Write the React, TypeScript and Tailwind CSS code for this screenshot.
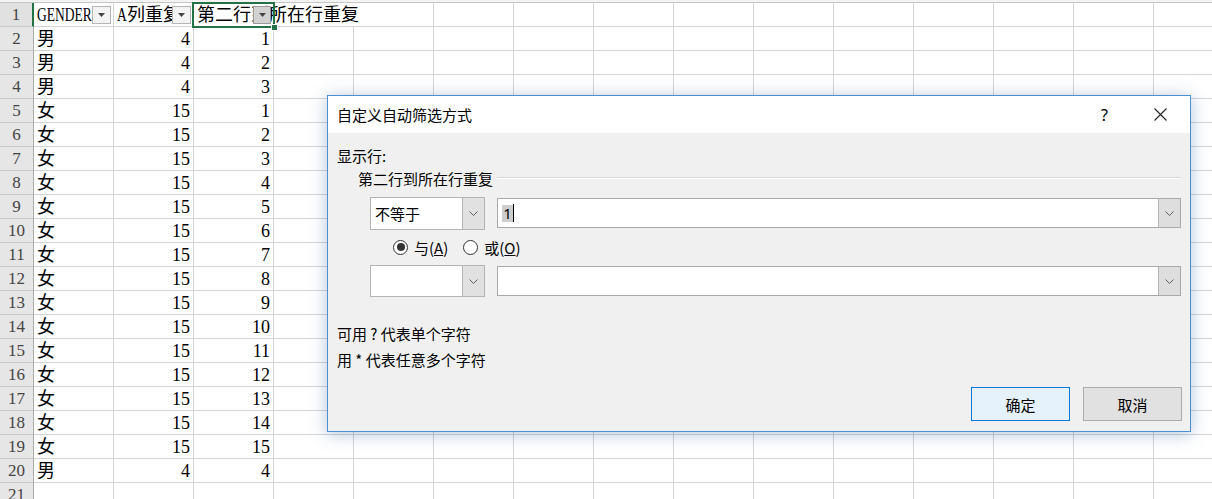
import React from 'react';

const rows: [string, number, number][] = [
  ['男', 4, 1], ['男', 4, 2], ['男', 4, 3],
  ['女', 15, 1], ['女', 15, 2], ['女', 15, 3], ['女', 15, 4], ['女', 15, 5],
  ['女', 15, 6], ['女', 15, 7], ['女', 15, 8], ['女', 15, 9], ['女', 15, 10],
  ['女', 15, 11], ['女', 15, 12], ['女', 15, 13], ['女', 15, 14], ['女', 15, 15],
  ['男', 4, 4],
];

const Tri = () => (
  <svg width="7" height="4" viewBox="0 0 7 4"><path d="M0 0h7L3.5 4z" fill="#444" /></svg>
);

function FilterBtn({ active }: { active?: boolean }) {
  return (
    <div
      className={
        active
          ? 'absolute right-[3px] top-[3px] w-[18px] h-[18px] flex items-center justify-center border border-[#9a9a9a] bg-[#d2d2d2] z-20'
          : 'absolute right-[2px] top-[3px] w-[19px] h-[18px] flex items-center justify-center border border-[#b4b4b4] bg-[#f3f3f3] z-20'
      }
    >
      <Tri />
    </div>
  );
}

const Chev = () => (
  <svg width="9" height="5" viewBox="0 0 9 5">
    <path d="M0.5 0.5L4.5 4.5L8.5 0.5" stroke="#5a5a5a" fill="none" strokeWidth="1" />
  </svg>
);

const extraCols = Array.from({ length: 12 });

function Row({ n, children }: { n: number; children?: React.ReactNode }) {
  return (
    <div className="flex h-[24px] flex-none">
      <div className="w-[34px] flex-none h-full border-r border-b border-r-[#ababab] border-b-[#c8c8c8] bg-[#e6e6e6] flex items-center justify-center text-[#444] text-[17px]">
        {n}
      </div>
      {children}
    </div>
  );
}

function Cell({ children, right, noRight }: { children?: React.ReactNode; right?: boolean; noRight?: boolean }) {
  return (
    <div
      className={
        (noRight ? 'border-b ' : 'border-r border-b ') +
        'w-[80px] flex-none h-full border-[#d4d4d4] flex items-center relative ' +
        (right ? 'justify-end pr-[3px]' : 'pl-[3px]')
      }
    >
      {children}
    </div>
  );
}

function Dialog() {
  return (
    <div
      className="absolute left-[327px] top-[95px] w-[864px] h-[337px] border border-[#4a8fd0] bg-[#f0f0f0] shadow-[0_2px_16px_rgba(40,90,150,0.35)] flex flex-col text-black text-[15px]"
      style={{ fontFamily: '"Noto Sans CJK SC", "Noto Sans", sans-serif' }}
    >
      <div className="h-[37px] flex-none bg-white flex items-center pl-[9px] pr-[23px]">
        <span className="leading-none">自定义自动筛选方式</span>
        <span className="ml-auto text-[16px] leading-none" style={{ fontFamily: '"Noto Sans", sans-serif' }}>?</span>
        <svg className="ml-[46px]" width="13" height="13" viewBox="0 0 13 13">
          <path d="M0.5 0.5L12.5 12.5M12.5 0.5L0.5 12.5" stroke="#222" strokeWidth="1.1" />
        </svg>
      </div>
      <div className="flex-1 flex flex-col px-[9px]">
        <div className="mt-[12px] h-[20px] flex items-center leading-none">显示行:</div>
        <div className="mt-[3px] h-[20px] flex items-center pl-[21px]">
          <span className="leading-none">第二行到所在行重复</span>
          <div className="flex-1 ml-[4px] h-[2px] border-t border-b border-t-[#d5d5d5] border-b-white" />
        </div>
        <div className="mt-[9px] h-[33px] flex items-start pl-[33px]">
          <div className="w-[116px] h-[33px] flex border border-[#b4b4b4] bg-white">
            <div className="flex-1 flex items-center pl-[4px] leading-none">不等于</div>
            <div className="w-[22px] flex items-center justify-center bg-[#e1e1e1] border-l border-[#b4b4b4]"><Chev /></div>
          </div>
          <div className="ml-[12px] mt-[1px] w-[688px] h-[30px] flex border border-[#a9a9a9] bg-white">
            <div className="flex-1 flex items-center pl-[4px]">
              <span className="bg-[#cdcdcd] h-[17px] flex items-center px-[1px] leading-none" style={{ fontFamily: '"Noto Sans", sans-serif' }}>1</span>
              <span className="w-[1px] h-[18px] bg-black" />
            </div>
            <div className="w-[22px] flex items-center justify-center bg-[#dedede] border-l border-[#b4b4b4]"><Chev /></div>
          </div>
        </div>
        <div className="mt-[7px] h-[20px] flex items-center pl-[56px]">
          <span className="w-[15px] h-[15px] rounded-full border border-[#333] bg-white flex items-center justify-center">
            <span className="w-[8px] h-[8px] rounded-full bg-[#333]" />
          </span>
          <span className="ml-[6px] leading-none">与(<span className="underline">A</span>)</span>
          <span className="ml-[15px] w-[15px] h-[15px] rounded-full border border-[#333] bg-white" />
          <span className="ml-[6px] leading-none">或(<span className="underline">O</span>)</span>
        </div>
        <div className="mt-[8px] h-[32px] flex items-start pl-[33px]">
          <div className="w-[116px] h-[32px] flex border border-[#b4b4b4] bg-white">
            <div className="flex-1" />
            <div className="w-[22px] flex items-center justify-center bg-[#e1e1e1] border-l border-[#b4b4b4]"><Chev /></div>
          </div>
          <div className="ml-[12px] mt-[1px] w-[688px] h-[30px] flex border border-[#a9a9a9] bg-white">
            <div className="flex-1" />
            <div className="w-[22px] flex items-center justify-center bg-[#dedede] border-l border-[#b4b4b4]"><Chev /></div>
          </div>
        </div>
        <div className="mt-[26px] h-[20px] flex items-center leading-none">可用 ? 代表单个字符</div>
        <div className="mt-[6px] h-[20px] flex items-center leading-none">用 * 代表任意多个字符</div>
        <div className="mt-[18px] h-[34px] flex justify-end mr-[-1px] gap-[13px]">
          <div className="w-[99px] h-[34px] border border-[#0078d7] bg-[#e5f1fb] flex items-center justify-center leading-none">确定</div>
          <div className="w-[99px] h-[34px] border border-[#adadad] bg-[#e1e1e1] flex items-center justify-center leading-none">取消</div>
        </div>
      </div>
    </div>
  );
}

export default function App() {
  return (
    <div
      className="w-[1212px] h-[499px] overflow-hidden relative bg-white text-black text-[18px] leading-none"
      style={{ fontFamily: '"Liberation Serif", "Noto Sans CJK SC", serif' }}
    >
      <div className="h-[3px] bg-[#f3f3f3] border-b border-[#c6c6c6]" />
      <div className="flex flex-col">
        <div className="flex h-[24px] flex-none relative">
          <div className="w-[34px] flex-none h-full border-r-2 border-b border-r-[#217346] border-b-[#c8c8c8] bg-[#e1e1e1] flex items-center justify-center text-[#444] text-[17px]">
            1
          </div>
          <Cell>
            <span className="inline-block origin-left scale-x-75 whitespace-nowrap">GENDER</span>
            <FilterBtn />
          </Cell>
          <Cell>
            <span className="whitespace-nowrap"><span className="inline-block origin-left scale-x-75 w-[10px]">A</span>列重复</span>
            <FilterBtn />
          </Cell>
          <div className="w-[80px] flex-none h-full border-b border-[#d4d4d4] flex items-center pl-[3px] relative">
            <span className="whitespace-nowrap relative z-10">第二行到所在行重复</span>
            <FilterBtn active />
          </div>
          <Cell noRight />
          {extraCols.map((_, i) => (
            <Cell key={i} />
          ))}
          <div className="absolute left-[192px] top-[-1px] w-[83px] h-[26px] border-2 border-[#217346] z-30 pointer-events-none" />
          <div className="absolute left-[271px] top-[21px] w-[7px] h-[7px] bg-[#217346] border border-white z-30" />
        </div>
        {rows.map((r, i) => (
          <Row key={i} n={i + 2}>
            <Cell>{r[0]}</Cell>
            <Cell right>{r[1]}</Cell>
            <Cell right>{r[2]}</Cell>
            {extraCols.map((_, j) => (
              <Cell key={j} />
            ))}
          </Row>
        ))}
        <Row n={21}>
          <Cell />
          <Cell />
          <Cell />
          {extraCols.map((_, j) => (
            <Cell key={j} />
          ))}
        </Row>
      </div>
      <Dialog />
    </div>
  );
}
